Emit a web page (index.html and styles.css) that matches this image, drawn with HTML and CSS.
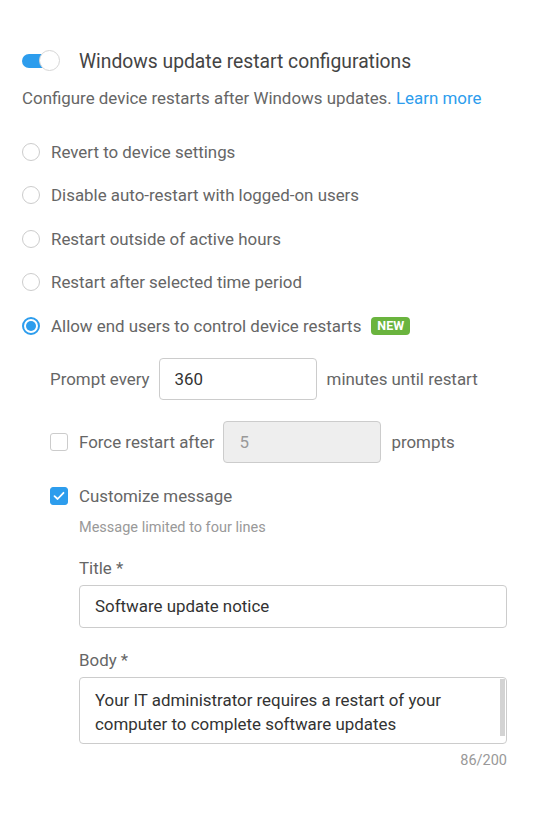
FILE: index.html
```html
<!DOCTYPE html>
<html lang="en">
<head>
    <meta charset="UTF-8">
    <meta name="viewport" content="width=device-width, initial-scale=1.0">
    <title>Windows update restart configurations</title>
    <link rel="stylesheet" href="styles.css">
</head>
<body>
    <div class="panel">
        <div class="header">
            <span class="toggle"><span class="knob"></span></span>
            <h2>Windows update restart configurations</h2>
        </div>
        <p class="desc">Configure device restarts after Windows updates. <a href="#">Learn more</a></p>

        <div class="options">
            <label class="option"><span class="radio"></span>Revert to device settings</label>
            <label class="option"><span class="radio"></span>Disable auto-restart with logged-on users</label>
            <label class="option"><span class="radio"></span>Restart outside of active hours</label>
            <label class="option"><span class="radio"></span>Restart after selected time period</label>
            <label class="option"><span class="radio checked"></span>Allow end users to control device restarts <span class="badge">NEW</span></label>
        </div>

        <div class="sub">
            <div class="inline-row prompt">
                <span>Prompt every</span>
                <input class="num" type="text" value="360">
                <span>minutes until restart</span>
            </div>

            <div class="inline-row force">
                <span class="check"></span>
                <span>Force restart after</span>
                <input class="num" type="text" value="5" disabled>
                <span>prompts</span>
            </div>

            <div class="inline-row custom">
                <span class="check checked">
                    <svg width="12" height="10" viewBox="0 0 12 10"><path d="M1.5 5.2 L4.6 8 L10.5 1.8" fill="none" stroke="#fff" stroke-width="1.8" stroke-linecap="round" stroke-linejoin="round"/></svg>
                </span>
                <span>Customize message</span>
            </div>

            <div class="message">
                <p class="hint">Message limited to four lines</p>
                <label class="field-label">Title *</label>
                <input class="text" type="text" value="Software update notice">
                <label class="field-label body-label">Body *</label>
                <div class="area-wrap">
                    <textarea class="area">Your IT administrator requires a restart of your computer to complete software updates</textarea>
                </div>
                <div class="counter">86/200</div>
            </div>
        </div>
    </div>
</body>
</html>
```

FILE: styles.css
```css
body {
    margin: 0;
    background-color: #fff;
    font-family: Roboto, "Noto Sans", Arial, sans-serif;
    color: #666;
}
.panel {
    padding: 50px 22px 40px 22px;
    width: 498px;
}
.header {
    display: flex;
    align-items: center;
    height: 22px;
}
.toggle {
    position: relative;
    width: 36px;
    height: 14px;
    border-radius: 7px;
    background-color: #2d9ded;
    margin-right: 21px;
}
.knob {
    position: absolute;
    left: 17px;
    top: -4px;
    width: 21px;
    height: 21px;
    border-radius: 50%;
    background-color: #fff;
    border: 1px solid #d6d6d6;
    box-sizing: border-box;
}
h2 {
    margin: 0;
    font-size: 19.3px;
    font-weight: 400;
    color: #444;
}
.desc {
    margin: 14px 0 0;
    font-size: 16.9px;
    line-height: 24px;
}
.desc a {
    color: #2d9ded;
    text-decoration: none;
}
.options {
    margin-top: 20px;
}
.option {
    display: flex;
    align-items: center;
    height: 43.5px;
    font-size: 16.9px;
}
.radio {
    width: 18px;
    height: 18px;
    border: 1px solid #ccc;
    border-radius: 50%;
    box-sizing: border-box;
    margin-right: 11px;
    position: relative;
}
.radio.checked {
    border: 2px solid #2d9ded;
}
.radio.checked::after {
    content: "";
    position: absolute;
    left: 2px;
    top: 2px;
    width: 10px;
    height: 10px;
    border-radius: 50%;
    background-color: #2d9ded;
}
.badge {
    margin-left: 10px;
    background-color: #6ab43e;
    color: #fff;
    font-size: 12.5px;
    font-weight: 700;
    line-height: 18px;
    padding: 0 6px;
    border-radius: 4px;
}
.sub {
    padding-left: 28px;
    margin-top: 10px;
}
.inline-row {
    display: flex;
    align-items: center;
    font-size: 16.9px;
}
.num {
    width: 158px;
    height: 42px;
    box-sizing: border-box;
    border: 1px solid #ccc;
    border-radius: 4px;
    padding: 0 15px;
    font-family: inherit;
    font-size: 16.9px;
    color: #333;
    margin: 0 10px 0 9px;
}
.num:disabled {
    background-color: #eee;
    color: #999;
}
.force {
    margin-top: 21px;
}
.check {
    width: 18px;
    height: 18px;
    box-sizing: border-box;
    border: 1px solid #ccc;
    border-radius: 3px;
    margin-right: 11px;
    display: flex;
    align-items: center;
    justify-content: center;
}
.check.checked {
    background-color: #2d9ded;
    border-color: #2d9ded;
}
.custom {
    margin-top: 21px;
    height: 24px;
}
.message {
    padding-left: 29px;
    width: 428px;
}
.hint {
    margin: 11px 0 0;
    font-size: 14.5px;
    line-height: 18px;
    color: #999;
}
.field-label {
    display: block;
    margin-top: 19px;
    font-size: 16.9px;
    line-height: 24px;
}
.body-label {
    margin-top: 20px;
}
.text, .area {
    display: block;
    width: 428px;
    box-sizing: border-box;
    border: 1px solid #ccc;
    border-radius: 4px;
    padding: 0 15px;
    font-family: inherit;
    font-size: 16.9px;
    color: #333;
    margin-top: 5px;
}
.text {
    height: 43px;
}
.area-wrap {
    position: relative;
    width: 428px;
}
.area-wrap::after {
    content: "";
    position: absolute;
    right: 2px;
    top: 2px;
    bottom: 8px;
    width: 5px;
    background-color: #d3d3d3;
}
.area {
    height: 67px;
    padding: 10px 15px;
    line-height: 24px;
    resize: none;
    overflow: hidden;
}
.counter {
    margin-top: 8px;
    text-align: right;
    font-size: 14.5px;
    line-height: 18px;
    color: #999;
}
```
